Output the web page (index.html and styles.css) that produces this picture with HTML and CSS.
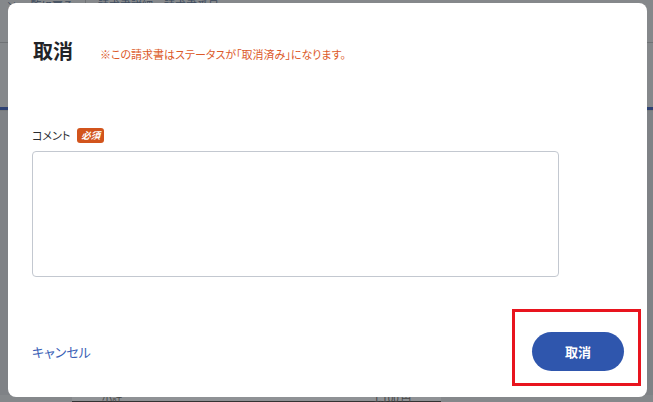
FILE: index.html
```html
<!DOCTYPE html>
<html lang="ja">
<head>
<meta charset="utf-8">
<link rel="stylesheet" href="styles.css">
</head>
<body>
<div class="page">
  <div class="page-top">
    <span class="crumb">× 一覧に戻る</span>
    <span class="crumb-sep"></span>
    <span class="crumb">請求書詳細　請求書番号</span>
  </div>
  <div class="page-band"></div>
  <div class="page-side"></div>
  <div class="page-bottom">
    <span>小計</span><span>1,100 円</span>
  </div>
</div>

<div class="modal">
  <div class="modal-head">
    <h2 class="modal-title">取消</h2>
    <p class="modal-note">※この請求書はステータスが「取消済み」になります。</p>
  </div>
  <div class="field">
    <div class="field-label">
      <span>コメント</span>
      <span class="badge">必須</span>
    </div>
    <textarea class="field-input"></textarea>
  </div>
  <div class="modal-foot">
    <a class="link-cancel">キャンセル</a>
    <button class="btn-primary">取消</button>
  </div>
</div>
<div class="highlight"></div>
</body>
</html>
```

FILE: styles.css
```css
html, body {
  margin: 0;
  padding: 0;
}
body {
  width: 653px;
  height: 402px;
  overflow: hidden;
  background: #85888b;
  font-family: "Noto Sans CJK JP", "Noto Sans", sans-serif;
  font-feature-settings: "palt";
  position: relative;
}
.page {
  height: 402px;
  display: flex;
  flex-direction: column;
}
.page-top {
  height: 42px;
  border-bottom: 1px solid #6f7275;
  display: flex;
  align-items: flex-start;
  gap: 12px;
  padding-left: 6px;
  font-size: 11px;
  color: #3c4a5c;
  line-height: 10px;
}
.crumb-sep {
  width: 1px;
  height: 10px;
  background: #6f7275;
}
.page-band {
  height: 64px;
  border-bottom: 3px solid #2d4173;
}
.page-side {
  flex: 1;
  background: #7f8286;
  border-top: 1px solid #777a7d;
}
.page-bottom {
  height: 6px;
  margin: 0 212px 0 72px;
  background: #8f9295;
  display: flex;
  justify-content: space-between;
  padding: 0 30px;
  font-size: 10px;
  line-height: 6px;
  color: #444;
  border-bottom: 1px solid #333;
}

.modal {
  position: absolute;
  left: 8px;
  top: 3px;
  width: 639px;
  height: 394px;
  background: #fff;
  border-radius: 8px;
  box-sizing: border-box;
  padding: 31px 23px 0 24px;
  display: flex;
  flex-direction: column;
}
.modal-head {
  display: flex;
  align-items: baseline;
  gap: 27px;
}
.modal-title {
  margin: 0 0 0 1px;
  font-size: 20px;
  font-weight: 700;
  color: #222428;
  line-height: 34px;
}
.modal-note {
  margin: 0;
  font-size: 11px;
  color: #dc5a2a;
  line-height: 16px;
}
.field {
  margin-top: 59px;
  display: flex;
  flex-direction: column;
  gap: 8px;
}
.field-label {
  display: flex;
  align-items: center;
  gap: 7px;
  font-size: 11px;
  color: #2a2c30;
  line-height: 16px;
}
.badge {
  background: #d2541c;
  color: #fff;
  font-size: 9.5px;
  font-weight: 700;
  font-style: italic;
  line-height: 15px;
  padding: 0 4px;
  border-radius: 3px;
}
.field-input {
  width: 527px;
  height: 126px;
  box-sizing: border-box;
  border: 1px solid #c3c8d0;
  border-radius: 4px;
  resize: none;
  margin: 0;
  padding: 6px;
  font-family: inherit;
}
.modal-foot {
  margin-top: 55px;
  display: flex;
  align-items: center;
  justify-content: space-between;
}
.link-cancel {
  font-size: 13px;
  color: #3b5fb6;
  line-height: 20px;
  cursor: pointer;
}
.btn-primary {
  width: 92px;
  height: 39px;
  border: none;
  border-radius: 20px;
  background: #2f56ad;
  color: #fff;
  font-family: inherit;
  font-feature-settings: "palt";
  font-size: 13px;
  font-weight: 700;
  padding: 0;
}
.highlight {
  position: absolute;
  left: 512px;
  top: 309px;
  width: 129px;
  height: 77px;
  box-sizing: border-box;
  border: 3px solid #e8141e;
}
```
